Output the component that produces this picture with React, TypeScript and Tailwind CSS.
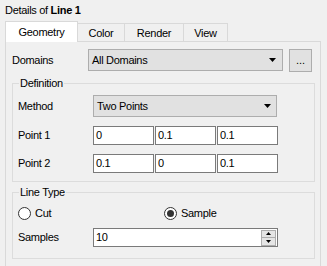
function ComboArrow() {
  return (
    <svg width="7" height="4" viewBox="0 0 7 4" className="shrink-0">
      <polygon points="0,0 7,0 3.5,4" fill="#000" />
    </svg>
  );
}

function Radio({ checked }: { checked?: boolean }) {
  return (
    <span className="flex h-[13px] w-[13px] shrink-0 items-center justify-center rounded-full border border-[#333] bg-white">
      {checked && <span className="h-[7px] w-[7px] rounded-full bg-[#333]" />}
    </span>
  );
}

export default function App() {
  return (
    <div className="h-[266px] w-[327px] overflow-hidden bg-[#f0f0f0] font-['Liberation_Sans',Arial,sans-serif] text-[11px] leading-[13px] tracking-[-0.3px] text-black">
      {/* title */}
      <div className="h-[21px] pl-[5px] pt-[4px]">
        Details of <span className="font-bold">Line 1</span>
      </div>

      {/* tabs */}
      <div className="ml-[5px] flex h-[21px] items-end">
        <div className="relative z-10 flex h-[21px] w-[73px] items-center justify-center border-x border-t border-[#d9d9d9] bg-white">
          Geometry
        </div>
        <div className="flex h-[19px] w-[47px] items-center justify-center border-r border-t border-[#d9d9d9]">Color</div>
        <div className="flex h-[19px] w-[59px] items-center justify-center border-r border-t border-[#d9d9d9]">Render</div>
        <div className="flex h-[19px] w-[44px] items-center justify-center border-r border-t border-[#d9d9d9]">View</div>
      </div>

      {/* pane */}
      <div className="-mt-px ml-[5px] h-[300px] w-[316px] border border-[#d9d9d9] bg-[#f0f0f0]">
        <div className="ml-[6px] mt-[7px] flex h-[23px] items-center">
          <span className="w-[76px]">Domains</span>
          <div className="flex h-[22px] w-[195px] items-center justify-between self-start border border-[#adadad] bg-[#e1e1e1] pl-[3px] pr-[6px]">
            <span>All Domains</span>
            <ComboArrow />
          </div>
          <div className="ml-[6px] flex h-[23px] w-[23px] items-end justify-center border border-[#adadad] bg-[#e1e1e1] pb-[4px] tracking-normal">
            ...
          </div>
        </div>

        {/* Definition */}
        <div className="relative ml-[6px] mt-[11px] w-[303px] border border-[#dcdcdc] pb-[8px] pl-[5px] pt-[11px]">
          <span className="absolute -top-[7px] left-[6px] bg-[#f0f0f0] px-[1px]">Definition</span>
          <div className="flex h-[22px] items-center">
            <span className="w-[75px]">Method</span>
            <div className="flex h-[22px] w-[184px] items-center justify-between border border-[#adadad] bg-[#e1e1e1] pl-[3px] pr-[5px]">
              <span>Two Points</span>
              <ComboArrow />
            </div>
          </div>
          <div className="mt-[9px] flex h-[19px] items-center">
            <span className="w-[75px]">Point 1</span>
            <div className="flex gap-px">
              <div className="flex h-[19px] w-[61px] items-center border border-[#7a7a7a] bg-white px-[2px]">0</div>
              <div className="flex h-[19px] w-[61px] items-center border border-[#7a7a7a] bg-white px-[2px]">0.1</div>
              <div className="flex h-[19px] w-[61px] items-center border border-[#7a7a7a] bg-white px-[2px]">0.1</div>
            </div>
          </div>
          <div className="mt-[9px] flex h-[19px] items-center">
            <span className="w-[75px]">Point 2</span>
            <div className="flex gap-px">
              <div className="flex h-[19px] w-[61px] items-center border border-[#7a7a7a] bg-white px-[2px]">0.1</div>
              <div className="flex h-[19px] w-[61px] items-center border border-[#7a7a7a] bg-white px-[2px]">0</div>
              <div className="flex h-[19px] w-[61px] items-center border border-[#7a7a7a] bg-white px-[2px]">0.1</div>
            </div>
          </div>
        </div>

        {/* Line Type */}
        <div className="relative ml-[6px] mt-[10px] w-[303px] border border-[#dcdcdc] pb-[11px] pl-[5px] pt-[14px]">
          <span className="absolute -top-[7px] left-[6px] bg-[#f0f0f0] px-[1px]">Line Type</span>
          <div className="flex h-[13px] items-center">
            <div className="flex w-[146px] items-center gap-[4px]">
              <Radio />
              <span>Cut</span>
            </div>
            <div className="flex items-center gap-[4px]">
              <Radio checked />
              <span>Sample</span>
            </div>
          </div>
          <div className="mt-[8px] flex h-[19px] items-center">
            <span className="w-[75px]">Samples</span>
            <div className="flex h-[19px] w-[185px] items-center justify-between border border-[#7a7a7a] bg-white pl-[2px] pr-px">
              <span>10</span>
              <div className="flex h-[16px] w-[15px] flex-col border border-[#adadad] bg-[#e5e5e5]">
                <div className="flex flex-1 items-center justify-center border-b border-[#adadad]">
                  <svg width="5" height="3" viewBox="0 0 5 3"><polygon points="2.5,0 5,3 0,3" fill="#000" /></svg>
                </div>
                <div className="flex flex-1 items-center justify-center">
                  <svg width="5" height="3" viewBox="0 0 5 3"><polygon points="0,0 5,0 2.5,3" fill="#000" /></svg>
                </div>
              </div>
            </div>
          </div>
        </div>
      </div>
    </div>
  );
}
